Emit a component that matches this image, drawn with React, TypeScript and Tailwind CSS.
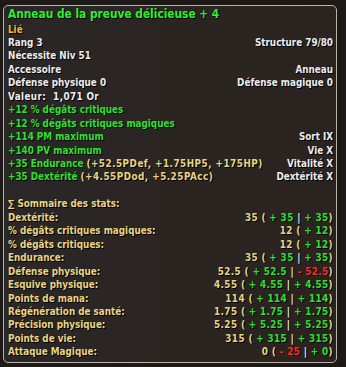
import React from "react";

const G = "text-[#2ee02e]";
const Y = "text-[#e8d482]";
const W = "text-[#ececec]";
const R = "text-[#ff2a2a]";

function Row({ left, right, cls = W }: { left: React.ReactNode; right?: React.ReactNode; cls?: string }) {
  return (
    <div className="flex justify-between whitespace-pre">
      <span className={cls}>{left}</span>
      {right !== undefined && <span className={W}>{right}</span>}
    </div>
  );
}

type Part = [string, "y" | "g" | "w" | "r"];
const colorOf = { y: Y, g: G, w: W, r: R };

function Stat({ label, parts }: { label: string; parts: Part[] }) {
  return (
    <div className="flex justify-between whitespace-pre">
      <span className={Y}>{label}</span>
      <span className="tracking-[0.4px]">
        {parts.map(([t, c], i) => (
          <span key={i} className={colorOf[c]}>
            {t}
          </span>
        ))}
      </span>
    </div>
  );
}

function two(n: string, a: string, b: string, bRed = false, aRed = false): Part[] {
  return [
    [n + " ( ", "y"],
    [a, aRed ? "r" : "g"],
    [" | ", "w"],
    [b, bRed ? "r" : "g"],
    [")", "y"],
  ];
}

export default function App() {
  return (
    <div
      className="w-[346px] h-[367px] bg-[#1c1917] pt-[5px] pl-[3px]"
      style={{ fontFamily: '"DejaVu Sans Condensed", "DejaVu Sans", sans-serif' }}
    >
      <div className="w-[334px] h-[358px] rounded-[5px] border border-[#b9b2aa] bg-gradient-to-r from-[#2a2727] via-[#2b2522] to-[#2a2320]">
        <div className="pl-[4px] pr-[3px] pt-[1px] font-bold text-[9.8px] leading-[13.45px] [text-shadow:1px_1px_0_#000]">
          <div className="text-[11.8px] leading-[15.5px] text-[#2af02a]">Anneau de la preuve délicieuse + 4</div>
          <Row left="Lié" cls="text-[#f2b72e]" />
          <Row left="Rang 3" right="Structure 79/80" />
          <Row left="Nécessite Niv 51" />
          <Row left="Accessoire" right="Anneau" />
          <Row left="Défense physique 0" right="Défense magique 0" />
          <Row left={<span className="tracking-[0.4px]">Valeur:  1,071 Or</span>} />
          <Row left="+12 % dégâts critiques" cls={G} />
          <Row left="+12 % dégâts critiques magiques" cls={G} />
          <Row left="+114 PM maximum" cls={G} right="Sort IX" />
          <Row left="+140 PV maximum" cls={G} right="Vie X" />
          <Row
            left={
              <>
                <span className={G}>+35 Endurance </span>
                <span className={Y + " tracking-[0.5px]"}>(+52.5PDef, +1.75HP5, +175HP)</span>
              </>
            }
            right="Vitalité X"
          />
          <Row
            left={
              <>
                <span className={G}>+35 Dextérité </span>
                <span className={Y + " tracking-[0.5px]"}>(+4.55PDod, +5.25PAcc)</span>
              </>
            }
            right="Dextérité X"
          />
          <div className="h-[13.45px]" />
          <div className={Y}>∑ Sommaire des stats:</div>
          <Stat label="Dextérité:" parts={two("35", "+ 35", "+ 35")} />
          <Stat label="% dégâts critiques magiques:" parts={[["12 ( ", "y"], ["+ 12", "g"], [")", "y"]]} />
          <Stat label="% dégâts critiques:" parts={[["12 ( ", "y"], ["+ 12", "g"], [")", "y"]]} />
          <Stat label="Endurance:" parts={two("35", "+ 35", "+ 35")} />
          <Stat label="Défense physique:" parts={two("52.5", "+ 52.5", "- 52.5", true)} />
          <Stat label="Esquive physique:" parts={two("4.55", "+ 4.55", "+ 4.55")} />
          <Stat label="Points de mana:" parts={two("114", "+ 114", "+ 114")} />
          <Stat label="Régénération de santé:" parts={two("1.75", "+ 1.75", "+ 1.75")} />
          <Stat label="Précision physique:" parts={two("5.25", "+ 5.25", "+ 5.25")} />
          <Stat label="Points de vie:" parts={two("315", "+ 315", "+ 315")} />
          <Stat label="Attaque Magique:" parts={two("0", "- 25", "+ 0", false, true)} />
        </div>
      </div>
    </div>
  );
}
